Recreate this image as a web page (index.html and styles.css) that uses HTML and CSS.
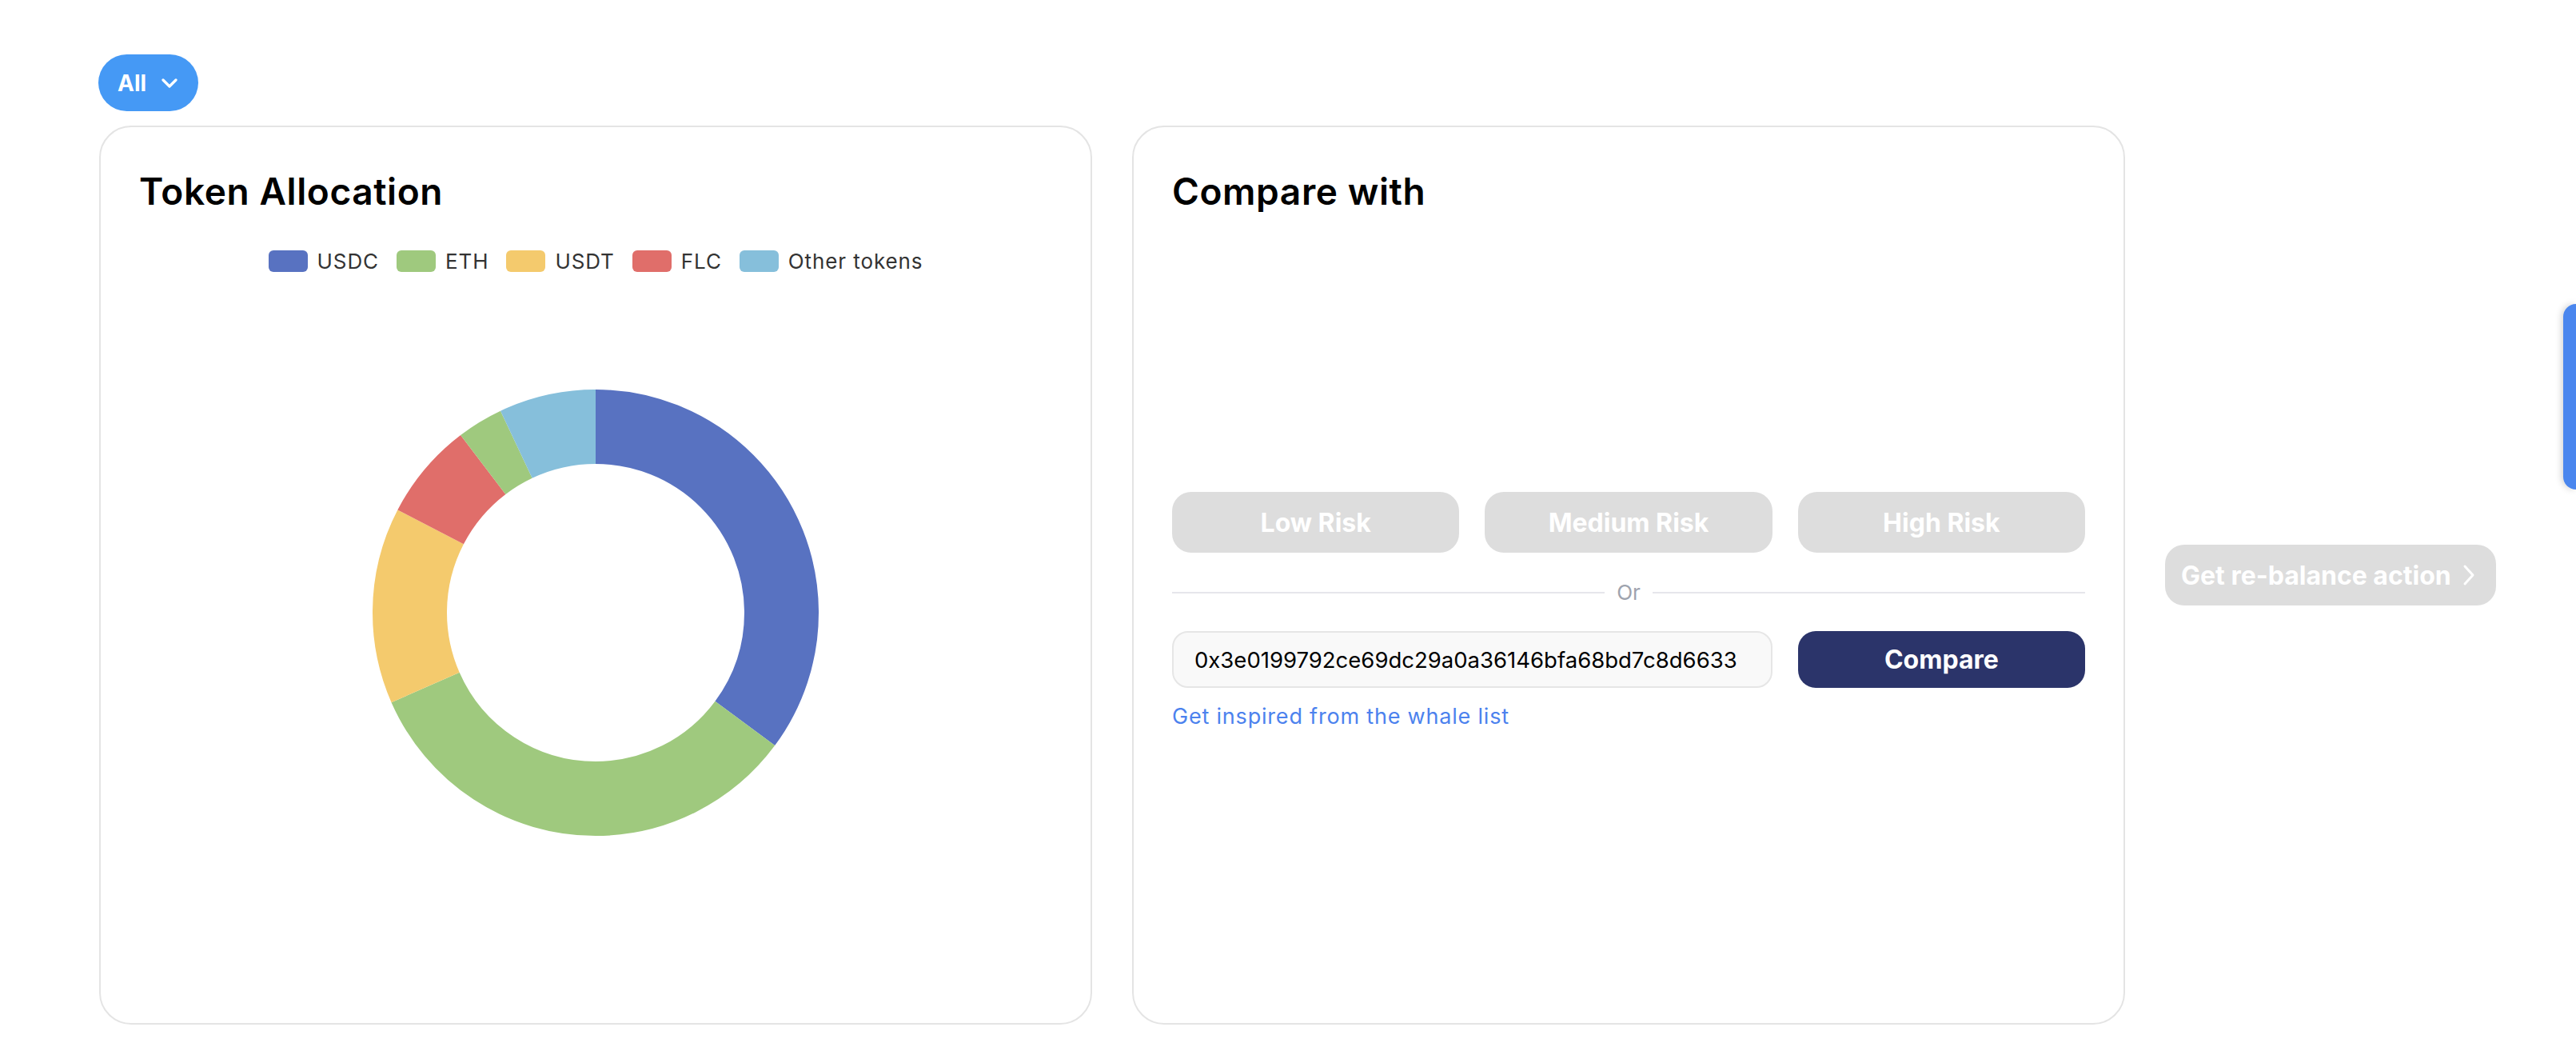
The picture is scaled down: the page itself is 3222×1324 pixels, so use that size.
FILE: index.html
```html
<!DOCTYPE html>
<html lang="en">
<head>
<meta charset="utf-8">
<title>Portfolio</title>
<link rel="stylesheet" href="styles.css">
</head>
<body>
<div class="page">
  <button class="filter" type="button">
    <span>All</span>
    <svg class="filter-chevron" viewBox="0 0 20 12" width="20" height="12" aria-hidden="true"><path d="M2 2 L10 10 L18 2" fill="none" stroke="#fff" stroke-width="3.2" stroke-linecap="round" stroke-linejoin="round"/></svg>
  </button>

  <div class="row">
    <section class="card">
      <h2 class="card-title">Token Allocation</h2>
      <ul class="legend">
        <li class="legend-item"><span class="swatch sw-usdc"></span>USDC</li>
        <li class="legend-item"><span class="swatch sw-eth"></span>ETH</li>
        <li class="legend-item"><span class="swatch sw-usdt"></span>USDT</li>
        <li class="legend-item"><span class="swatch sw-flc"></span>FLC</li>
        <li class="legend-item"><span class="swatch sw-other"></span>Other tokens</li>
      </ul>
      <div class="chart">
        <svg class="donut" viewBox="0 0 558 558" width="558" height="558" aria-hidden="true">
          <g transform="rotate(-90 279 279)" fill="none" stroke-width="93">
            <circle cx="279" cy="279" r="232.5" stroke="#5872c1" stroke-dasharray="513.3 1460.84" stroke-dashoffset="0"/>
            <circle cx="279" cy="279" r="232.5" stroke="#9fc97e" stroke-dasharray="485.7 1460.84" stroke-dashoffset="-513.3"/>
            <circle cx="279" cy="279" r="232.5" stroke="#f4ca6d" stroke-dasharray="207.4 1460.84" stroke-dashoffset="-999"/>
            <circle cx="279" cy="279" r="232.5" stroke="#e06e6a" stroke-dasharray="102.7 1460.84" stroke-dashoffset="-1206.4"/>
            <circle cx="279" cy="279" r="232.5" stroke="#9fc97e" stroke-dasharray="48.7 1460.84" stroke-dashoffset="-1309.1"/>
            <circle cx="279" cy="279" r="232.5" stroke="#86bfdb" stroke-dasharray="103.1 1460.84" stroke-dashoffset="-1357.8"/>
          </g>
        </svg>
      </div>
    </section>

    <section class="card">
      <h2 class="card-title">Compare with</h2>
      <div class="risk-grid">
        <button class="risk-btn" type="button">Low Risk</button>
        <button class="risk-btn" type="button">Medium Risk</button>
        <button class="risk-btn" type="button">High Risk</button>
      </div>
      <div class="or-divider"><span>Or</span></div>
      <div class="address-grid">
        <input class="address-input" type="text" value="0x3e0199792ce69dc29a0a36146bfa68bd7c8d6633">
        <button class="compare-btn" type="button">Compare</button>
      </div>
      <a class="whale-link" href="#">Get inspired from the whale list</a>
    </section>

    <button class="rebalance-btn" type="button">
      <span>Get re-balance action</span>
      <svg viewBox="0 0 16 28" width="16" height="28" aria-hidden="true"><path d="M3 3 L13 14 L3 25" fill="none" stroke="#fff" stroke-width="3" stroke-linecap="round" stroke-linejoin="round"/></svg>
    </button>
  </div>
</div>
<div class="side-tab"></div>
</body>
</html>
```
FILE: styles.css
```css
* { box-sizing: border-box; }

body {
  margin: 0;
  background: #fff;
  font-family: Inter, "Noto Sans", sans-serif;
  color: #000;
}

.page {
  padding: 68px 0 0 123px;
}

.filter {
  display: flex;
  align-items: center;
  gap: 19px;
  height: 71px;
  padding: 0 26px 0 24px;
  border: 0;
  border-radius: 36px;
  background: #4599f5;
  color: #fff;
  font-family: Inter, sans-serif;
  font-weight: 700;
  font-size: 28px;
}

.filter-chevron { display: block; }

.row {
  display: flex;
  align-items: center;
  gap: 50px;
  margin-top: 18px;
  margin-left: 1px;
}

.card {
  width: 1242px;
  height: 1124px;
  flex: none;
  border: 2px solid #e4e4e4;
  border-radius: 40px;
  padding: 52px 48px 48px;
  display: flex;
  flex-direction: column;
}

.card-title {
  margin: 0;
  font-size: 46px;
  line-height: 56px;
  font-weight: 600;
  letter-spacing: 0.6px;
}

.legend {
  list-style: none;
  margin: 45px 0 0;
  padding: 0;
  display: flex;
  justify-content: center;
  gap: 22px;
}

.legend-item {
  display: flex;
  align-items: center;
  gap: 12px;
  height: 28px;
  font-size: 26px;
  letter-spacing: 0.9px;
  color: #333;
}

.swatch {
  width: 49px;
  height: 27px;
  border-radius: 6px;
}
.sw-usdc { background: #5872c1; }
.sw-eth { background: #9fc97e; }
.sw-usdt { background: #f4ca6d; }
.sw-flc { background: #e06e6a; }
.sw-other { background: #86bfdb; }

.chart {
  margin-top: 147px;
  display: flex;
  justify-content: center;
}

.donut { display: block; }

.risk-grid {
  margin-top: 348px;
  display: grid;
  grid-template-columns: repeat(3, 1fr);
  gap: 32px;
}

.risk-btn {
  height: 76px;
  border: 0;
  border-radius: 24px;
  background: #dddddd;
  color: #fff;
  font-family: Inter, sans-serif;
  font-weight: 700;
  font-size: 32px;
}

.or-divider {
  margin-top: 34px;
  display: flex;
  align-items: center;
  gap: 15px;
  font-size: 26px;
  line-height: 32px;
  color: #9ea3ae;
}
.or-divider::before,
.or-divider::after {
  content: "";
  flex: 1;
  height: 2px;
  background: #e6e6eb;
}

.address-grid {
  margin-top: 32px;
  display: grid;
  grid-template-columns: repeat(3, 1fr);
  gap: 32px;
}

.address-input {
  grid-column: span 2;
  height: 71px;
  min-width: 0;
  border: 2px solid #e6e6e6;
  border-radius: 20px;
  background: #f9f9f9;
  padding: 0 26px;
  font-family: Inter, sans-serif;
  font-size: 27.5px;
  color: #000;
  outline: none;
}

.compare-btn {
  height: 71px;
  border: 0;
  border-radius: 22px;
  background: #2b346a;
  color: #fff;
  font-family: Inter, sans-serif;
  font-weight: 700;
  font-size: 32px;
}

.whale-link {
  align-self: flex-start;
  margin-top: 20px;
  font-size: 27px;
  line-height: 32px;
  letter-spacing: 0.8px;
  color: #4c82ee;
  text-decoration: none;
}

.rebalance-btn {
  flex: none;
  display: flex;
  align-items: center;
  gap: 14px;
  height: 76px;
  padding: 0 26px 0 20px;
  border: 0;
  border-radius: 24px;
  background: #dddddd;
  color: #fff;
  font-family: Inter, sans-serif;
  font-weight: 700;
  font-size: 32px;
}
.rebalance-btn svg { display: block; }

.side-tab {
  position: fixed;
  right: 0;
  top: 380px;
  width: 16px;
  height: 232px;
  background: #4a86ee;
  border-radius: 16px 0 0 16px;
  box-shadow: -2px 0 8px rgba(0, 0, 0, 0.18);
}
```
